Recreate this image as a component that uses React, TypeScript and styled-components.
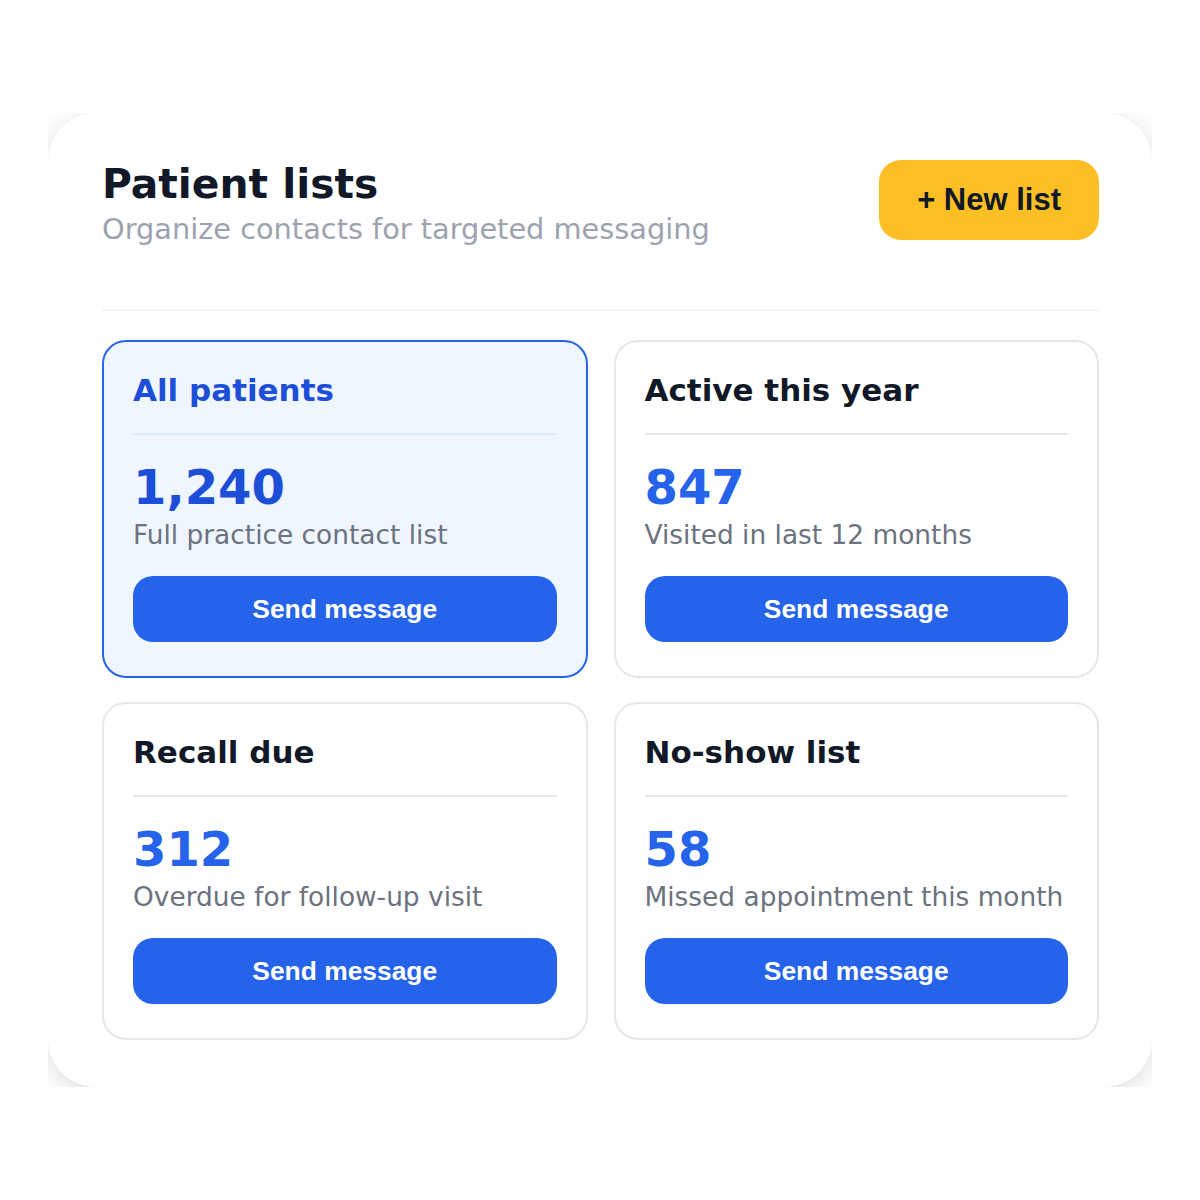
import React from "react";
import styled, { createGlobalStyle } from "styled-components";

type PatientList = {
  name: string;
  count: string;
  description: string;
  selected?: boolean;
};

const lists: PatientList[] = [
  { name: "All patients", count: "1,240", description: "Full practice contact list", selected: true },
  { name: "Active this year", count: "847", description: "Visited in last 12 months" },
  { name: "Recall due", count: "312", description: "Overdue for follow-up visit" },
  { name: "No-show list", count: "58", description: "Missed appointment this month" },
];

function App() {
  return (
    <>
      <GlobalStyle />
      <Page>
        <Frame>
          <Panel>
            <Header>
              <div>
                <Title>Patient lists</Title>
                <Subtitle>Organize contacts for targeted messaging</Subtitle>
              </div>
              <NewButton type="button">+ New list</NewButton>
            </Header>
            <Divider />
            <Grid>
              {lists.map((list) => (
                <ListCard key={list.name} $selected={list.selected}>
                  <CardTitle $selected={list.selected}>{list.name}</CardTitle>
                  <Count $selected={list.selected}>{list.count}</Count>
                  <Description>{list.description}</Description>
                  <SendButton type="button">Send message</SendButton>
                </ListCard>
              ))}
            </Grid>
          </Panel>
        </Frame>
      </Page>
    </>
  );
}

export default App;

const GlobalStyle = createGlobalStyle`
  body {
    margin: 0;
    background: #ffffff;
    font-family: "DejaVu Sans", "Noto Sans", sans-serif;
  }
`;

const Page = styled.div`
  min-height: 100vh;
  box-sizing: border-box;
  padding: 0 48px;
  display: flex;
  align-items: center;
  justify-content: center;
`;

// the shadow is cut to the panel's box, as in the screenshot
const Frame = styled.div`
  width: 100%;
  overflow: hidden;
`;

const Panel = styled.div`
  background: #ffffff;
  border-radius: 48px;
  padding: 47px 53px 47px 54px;
  box-shadow: 0 6px 28px rgba(0, 0, 0, 0.14);
`;

const Header = styled.div`
  display: flex;
  align-items: flex-start;
  justify-content: space-between;
`;

const Title = styled.h1`
  margin: 0;
  font-size: 40.8px;
  font-weight: 700;
  color: #111827;
`;

const Subtitle = styled.p`
  margin: 4px 0 0;
  font-size: 28.8px;
  color: #9ca3af;
`;

const NewButton = styled.button`
  border: 0;
  border-radius: 22px;
  background: #fbbf24;
  color: #111827;
  font-family: "Liberation Sans", Arial, sans-serif;
  font-size: 31px;
  font-weight: 700;
  padding: 22px 38px;
  cursor: pointer;
`;

const Divider = styled.hr`
  margin: 63px 0 29px;
  border: 0;
  border-top: 2px solid #f3f4f6;
`;

const Grid = styled.div`
  display: grid;
  grid-template-columns: 1fr 1fr;
  column-gap: 26px;
  row-gap: 24px;
`;

const ListCard = styled.div<{ $selected?: boolean }>`
  display: flex;
  flex-direction: column;
  border: 2px solid ${(p) => (p.$selected ? "#2563eb" : "#e5e7eb")};
  background: ${(p) => (p.$selected ? "#eff6ff" : "#ffffff")};
  border-radius: 24px;
  padding: 30px 29px 34px;
`;

const CardTitle = styled.h2<{ $selected?: boolean }>`
  margin: 0;
  font-size: 31px;
  font-weight: 700;
  color: ${(p) => (p.$selected ? "#1d4ed8" : "#111827")};
  padding-bottom: 25px;
  border-bottom: 2px solid ${(p) => (p.$selected ? "#dbeafe" : "#e5e7eb")};
`;

const Count = styled.div<{ $selected?: boolean }>`
  margin-top: 24px;
  font-size: 48px;
  font-weight: 700;
  color: ${(p) => (p.$selected ? "#1d4ed8" : "#2563eb")};
`;

const Description = styled.div`
  margin-top: 4px;
  font-size: 26.4px;
  color: #6b7280;
`;

const SendButton = styled.button`
  margin-top: 26px;
  height: 66px;
  border: 0;
  border-radius: 20px;
  background: #2563eb;
  color: #ffffff;
  font-family: "Liberation Sans", Arial, sans-serif;
  font-size: 26.4px;
  font-weight: 700;
  cursor: pointer;
`;
